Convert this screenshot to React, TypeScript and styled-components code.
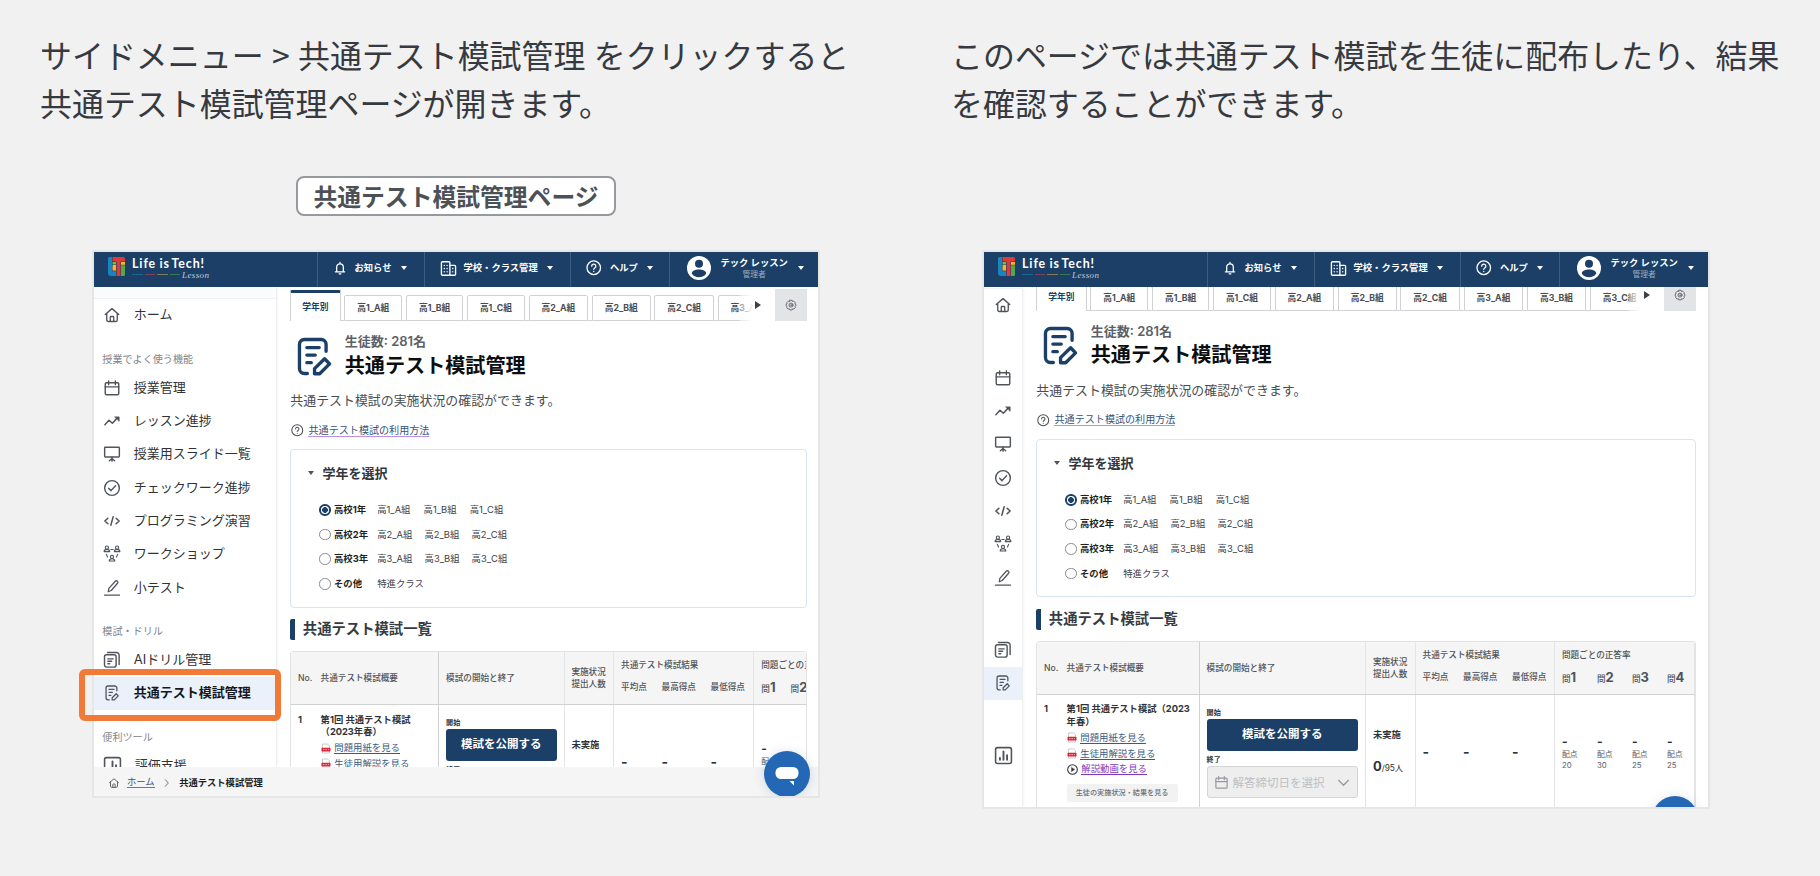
import React from 'react';
import styled, { createGlobalStyle, css } from 'styled-components';

const navy = '#1b3f67';
const sans = `Inter, "Noto Sans CJK JP", sans-serif`;

const Global = createGlobalStyle`
  * { box-sizing: border-box; }
  body { margin: 0; background: #f1f1f1; font-family: ${sans}; }
  p, h1, h2, h3 { margin: 0; }
`;

const Page = styled.div`
  width: 1820px;
  height: 876px;
  overflow: hidden;
  display: flex;
  background: #f1f1f1;
`;

const Column = styled.section<{ $w: number }>`
  width: ${(p) => p.$w}px;
  flex: none;
  display: flex;
  flex-direction: column;
  align-items: center;
  padding-top: 30px;
`;

const Lead = styled.p<{ $left: number }>`
  align-self: flex-start;
  margin-left: ${(p) => p.$left}px;
  height: 96px;
  font: 400 31.95px/48px "Noto Sans CJK JP", sans-serif;
  word-spacing: 1.2px;
  color: #363a40;
  white-space: nowrap;
`;

const LabelSlot = styled.div`
  height: 40px;
  margin: 50px 0 34px;
`;

const Label = styled.div`
  width: 320px;
  height: 40px;
  border: 2px solid #96999d;
  border-radius: 8px;
  background: #fff;
  text-align: center;
  font: 700 23.8px/35px "Noto Sans CJK JP", sans-serif;
  color: #4d5156;
  white-space: nowrap;
`;

const Frame = styled.div<{ $h: number }>`
  position: relative;
  width: 728px;
  height: ${(p) => p.$h}px;
  border: 2px solid #e6e6e6;
`;

const Highlight = styled.div`
  position: absolute;
  left: -15px;
  top: 417px;
  width: 202px;
  height: 52px;
  border: 6px solid #f17a38;
  border-radius: 6px;
`;

const Screen = styled.div`
  position: relative;
  width: 100%;
  height: 100%;
  overflow: hidden;
  background: #fff;
  display: flex;
  flex-direction: column;
  color: #33373c;
  white-space: nowrap;
`;

/* Header */
const Header = styled.header`
  flex: none;
  height: 35px;
  display: flex;
  background: ${navy};
  color: #fff;
`;

const Brand = styled.div`
  width: 223px;
  display: flex;
  padding: 5px 0 0 14px;
`;

const BrandText = styled.div`
  margin: -1px 0 0 7px;
  font: 700 12.4px/15px Lato, sans-serif;
  letter-spacing: 0.9px;
  word-spacing: -2px;
`;

const BrandWord = styled.span`
  margin-right: 1.5px;
`;

const BrandRule = styled.div`
  display: flex;
  align-items: center;
  gap: 2px;
  height: 7px;
`;

const Dash = styled.i<{ $c: string }>`
  width: 10.5px;
  height: 1px;
  background: ${(p) => p.$c};
`;

const Script = styled.span`
  font: italic 400 9px/8px "Liberation Serif", serif;
  letter-spacing: 0.4px;
  color: #c3cedb;
`;

const HeaderItem = styled.div<{ $w: number; $pad: number }>`
  width: ${(p) => p.$w}px;
  padding: 0 0 3px ${(p) => p.$pad}px;
  border-left: 1px solid #3d5c7f;
  display: flex;
  align-items: center;
  font-size: 9.3px;
  line-height: 12px;
  font-weight: 700;
`;

const HeaderText = styled.span<{ $l: number }>`
  margin-left: ${(p) => p.$l}px;
  margin-top: -1px;
`;

const User = styled.div`
  margin: -1px 0 0 10px;
  text-align: center;
  line-height: 12px;
  small {
    display: block;
    font-size: 7.8px;
    line-height: 10px;
    font-weight: 400;
    color: #a0aec0;
  }
`;

const Caret = styled.i<{ $l?: number; $s?: number; $c?: string; $right?: boolean }>`
  flex: none;
  margin-left: ${(p) => p.$l ?? 0}px;
  width: 0;
  height: 0;
  border: ${(p) => p.$s ?? 3}px solid transparent;
  ${(p) =>
    p.$right
      ? css`border-left: 6.5px solid ${p.$c}; border-right: 0; border-top-width: 4px; border-bottom-width: 4px;`
      : css`border-top: ${(p.$s ?? 3) + 1.2}px solid ${p.$c ?? '#fff'}; border-bottom: 0;`}
`;

const Body = styled.div`
  flex: 1;
  min-height: 0;
  display: flex;
  overflow: hidden;
`;

/* Sidebar */
const Sidebar = styled.nav<{ $mini: boolean }>`
  flex: none;
  width: ${(p) => (p.$mini ? 38 : 182)}px;
  box-shadow: 0 0 3px rgba(60, 70, 90, 0.22);
  background: #fff;
`;

const Strip = styled.div<{ $h: number }>`
  height: ${(p) => p.$h}px;
  background: #fafbfd;
  border-bottom: 1px solid #f0f1f4;
`;

const NavItem = styled.div<{ $active?: boolean; $mini: boolean }>`
  height: 33.33px;
  display: flex;
  align-items: center;
  padding-left: ${(p) => (p.$mini ? 10 : 9.3)}px;
  background: ${(p) => (p.$active ? '#eaf1fa' : 'transparent')};
  color: ${(p) => (p.$active ? '#15181c' : '#2f3338')};
  font-size: 13px;
  line-height: 18px;
  font-weight: ${(p) => (p.$active ? 700 : 400)};
  svg { flex: none; color: #50555c; }
  span { margin: -2px 0 0 12.5px; }
`;

const NavLabel = styled.div`
  height: 39px;
  padding: 20px 0 0 8.3px;
  font-size: 10.1px;
  line-height: 14px;
  color: #80848a;
`;

/* Main */
const Main = styled.main<{ $mini: boolean }>`
  flex: none;
  width: ${(p) => (p.$mini ? 659.5 : 516.5)}px;
  margin-left: 14.3px;
  padding-top: 2px;
  margin-top: ${(p) => (p.$mini ? -10.2 : 0)}px;
`;

const TabBar = styled.div`
  position: relative;
  height: 32px;
  display: flex;
  align-items: flex-end;
  overflow: hidden;
`;

const TabGap = styled.div`
  flex: none;
  width: 3.7px;
  height: 1px;
  background: #cfd1d4;
`;

const Tab = styled.div<{ $active?: boolean }>`
  flex: none;
  height: ${(p) => (p.$active ? 31 : 26)}px;
  width: ${(p) => (p.$active ? '50.3px' : 'auto')};
  padding: 0 ${(p) => (p.$active ? 0 : 11.95)}px;
  text-align: center;
  border: 1px solid #cfd1d4;
  border-radius: 2px 2px 0 0;
  font-size: 8.75px;
  font-weight: 700;
  line-height: 25px;
  color: #4a4e54;
  ${(p) =>
    p.$active &&
    css`
      color: ${navy};
      border-top: 3px solid ${navy};
      border-bottom: 0;
      line-height: 29px;
    `}
`;

const TabEnd = styled.div`
  position: absolute;
  right: 0;
  top: 0;
  height: 32px;
  display: flex;
`;

const Fade = styled.div`
  width: 35px;
  display: flex;
  align-items: center;
  padding: 0 0 0 15px;
  background: linear-gradient(90deg, rgba(255, 255, 255, 0.4), #fff 38%);
`;

const Gear = styled.div`
  width: 32px;
  background: #e3e4e6;
  display: grid;
  place-items: center;
  color: #5a5f66;
`;

const TitleRow = styled.div`
  display: flex;
  height: 47px;
  margin-top: 11px;
  padding-left: 6.7px;
  svg { margin-top: 4.5px; color: ${navy}; }
`;

const TitleText = styled.div`
  margin-left: 12.3px;
  font-size: 13px;
  line-height: 18px;
  font-weight: 600;
  color: #5c6167;
  h1 {
    margin-top: 2.5px;
    font-size: 20.1px;
    line-height: 27px;
    font-weight: 700;
    color: #0c0e10;
  }
`;

const Desc = styled.p`
  margin-top: 11px;
  font-size: 12.93px;
  line-height: 20px;
  color: #4a4e54;
`;

const HelpLink = styled.div`
  margin-top: 12.5px;
  height: 16px;
  display: flex;
  align-items: center;
  padding-left: 1px;
  color: #4a4e54;
  a {
    margin-left: 4.7px;
    font-size: 10.08px;
    line-height: 11px;
    color: #34557c;
    border-bottom: 1px solid #c08fdc;
  }
`;

const Card = styled.div`
  margin-top: 10.5px;
  height: 158.5px;
  border: 1px solid #d8e5f3;
  border-radius: 4px;
  padding-top: 13px;
`;

const CardTitle = styled.h3`
  display: flex;
  align-items: center;
  gap: 8.3px;
  padding-left: 17px;
  font-size: 13px;
  line-height: 20px;
  font-weight: 600;
  margin-bottom: 14.7px;
`;

const GradeRow = styled.div<{ $gap: number }>`
  height: 24.6px;
  display: flex;
  align-items: center;
  padding-left: 28.2px;
  font-size: 9.4px;
  line-height: 14px;
  b { width: 43.2px; margin-left: 3px; color: #1c1f23; }
  span { margin-right: ${(p) => p.$gap}px; color: #3d4147; }
`;

const Radio = styled.i<{ $on?: boolean }>`
  width: 11.5px;
  height: 11.5px;
  border-radius: 50%;
  background: #fff;
  border: 1px solid #868a90;
  ${(p) =>
    p.$on &&
    css`
      border: 2px solid ${navy};
      background: radial-gradient(circle, ${navy} 0 2.6px, #fff 3.1px);
    `}
`;

const SectionTitle = styled.h2`
  margin-top: 11.5px;
  height: 21px;
  border-left: 5px solid ${navy};
  border-radius: 2px;
  padding-left: 7.5px;
  font-size: 14.35px;
  line-height: 20px;
  font-weight: 600;
  color: #383c42;
`;

/* Table */
const Table = styled.div`
  margin-top: 11.3px;
  border: 1px solid #e2e3e5;
  border-radius: 3px 3px 0 0;
  overflow: hidden;
`;

const Row = styled.div<{ $mini: boolean; $head?: boolean }>`
  display: grid;
  grid-template-columns: ${(p) => (p.$mini ? '162.5px 166.3px 49.7px 139.3px 1fr' : '148px 125.3px 49.7px 140.2px 196px')};
  height: ${(p) => (p.$head ? 53 : 130)}px;
  background: ${(p) => (p.$head ? '#f5f5f5' : '#fff')};
  border-bottom: 1px solid #cfd0d2;
  font-size: ${(p) => (p.$head ? 8.6 : 9.3)}px;
  font-weight: ${(p) => (p.$head ? 500 : 400)};
  color: ${(p) => (p.$head ? '#4f5359' : '#2f3338')};
`;

const Cell = styled.div<{ $line?: string }>`
  padding-left: 6.8px;
  border-right: 1px solid ${(p) => p.$line ?? '#e4e5e7'};
  overflow: hidden;
`;

const HeadLine = styled.div<{ $top: number }>`
  padding-top: ${(p) => p.$top}px;
  line-height: 12px;
  display: flex;
`;

const Slot = styled.span<{ $w: number }>`
  width: ${(p) => p.$w}px;
  flex: none;
`;

const BigNo = styled.b`
  font-size: 13px;
  font-weight: 700;
`;

const Overview = styled.div`
  display: flex;
  padding-top: 8.3px;
  line-height: 12.8px;
  font-weight: 700;
`;

const Doc = styled.div<{ $visited?: boolean }>`
  display: flex;
  align-items: center;
  height: 15.8px;
  font-weight: 400;
  span {
    margin-left: 3.7px;
    line-height: 11px;
    font-size: 9.4px;
    color: ${(p) => (p.$visited ? '#8536b8' : '#3b5b7e')};
    border-bottom: 1px solid ${(p) => (p.$visited ? '#8536b8' : '#3b5b7e')};
  }
`;

const DocList = styled.div`
  padding-top: 1px;
`;

const GrayButton = styled.div`
  width: 111px;
  height: 18px;
  margin-top: 7px;
  background: #f2f2f3;
  border-radius: 2px;
  text-align: center;
  font-size: 7.15px;
  line-height: 17px;
  font-weight: 500;
  color: #6b6f75;
`;

const Schedule = styled.div`
  padding: 10.5px 7px 0 0;
`;

const Tiny = styled.div`
  font-size: 7.1px;
  line-height: 13px;
  height: 13.5px;
  font-weight: 600;
`;

const Publish = styled.div`
  height: 32px;
  border-radius: 3px;
  background: ${navy};
  color: #fff;
  text-align: center;
  font-size: 11.5px;
  line-height: 31px;
  font-weight: 700;
  margin-bottom: 1.5px;
`;

const DateSelect = styled.div`
  height: 32px;
  border: 1px solid #d3d4d6;
  border-radius: 3px;
  background: #eeeeef;
  display: flex;
  align-items: center;
  padding: 0 7.5px 0 6.5px;
  font-size: 11.5px;
  color: #bdbfc2;
  span { flex: 1; margin: -1px 0 0 3.5px; }
  svg { color: #96999d; }
`;

const Status = styled.div`
  padding-top: 33px;
  line-height: 14px;
  font-weight: 600;
  p { margin-top: 15px; font-weight: 400; font-size: 8.3px; line-height: 18px; }
  p b { font-size: 13px; }
`;

const Scores = styled.div`
  padding-top: 49px;
  display: flex;
  font-size: 14px;
  line-height: 16px;
  font-weight: 700;
`;

const Points = styled.div<{ $top: number }>`
  padding-top: ${(p) => p.$top}px;
  display: flex;
  font-size: 7.8px;
  line-height: 10.4px;
  color: #5a5e64;
  b { display: block; font-size: 12px; line-height: 13px; height: 14px; color: #2b2f34; }
`;

/* Overlays */
const Breadcrumb = styled.footer`
  flex: none;
  height: 29px;
  background: #f5f5f5;
  display: flex;
  align-items: center;
  padding: 2px 0 0 13.5px;
  font-size: 9.3px;
  color: #50555c;
  a { margin: -1px 8px 0 7.5px; line-height: 11px; color: #34557c; border-bottom: 1px solid #5f7b99; }
  b { margin: -1px 0 0 8.5px; color: #1c1f23; }
`;

const Chat = styled.div<{ $left: number; $top: number }>`
  position: absolute;
  left: ${(p) => p.$left}px;
  top: ${(p) => p.$top}px;
  width: 46px;
  height: 46px;
  border-radius: 50%;
  background: #2468b5;
  box-shadow: 0 1px 12px rgba(20, 60, 110, 0.16);
`;

/* Icons */
type IconProps = { s?: number; w?: number; children?: React.ReactNode };
const Svg = ({ s = 16, w = 1.9, children }: IconProps) => (
  <svg width={s} height={s} viewBox="0 0 24 24" fill="none" stroke="currentColor" strokeWidth={w} strokeLinecap="round" strokeLinejoin="round">
    {children}
  </svg>
);

const HomeIcon = ({ s = 18 }: IconProps) => (
  <Svg s={s} w={1.8}>
    <path d="M3 11.3 12 3.5l9 7.8M5 10v8.5A2.2 2.2 0 0 0 7.2 20.7h9.6A2.2 2.2 0 0 0 19 18.5V10" />
    <path d="M9.7 20.5V15a1 1 0 0 1 1-1h2.6a1 1 0 0 1 1 1v5.5" />
  </Svg>
);
const CalendarIcon = ({ s = 18 }: IconProps) => (
  <Svg s={s}>
    <rect x="3" y="5" width="18" height="16" rx="1.6" />
    <path d="M3 10.5h18M7.5 2.5v5M16.5 2.5v5" />
  </Svg>
);
const TrendIcon = () => (
  <Svg s={18} w={2}>
    <path d="M2.5 17l5.500-6 4.500 4 6-6.500" />
    <path d="M16 6.500h5.500V12z" fill="currentColor" strokeWidth={1} />
  </Svg>
);
const BoardIcon = () => (
  <Svg s={18}>
    <rect x="2.2" y="3" width="19.6" height="13" rx="1" />
    <path d="M12 16v5.500M12 18l-3.500 3M12 18l3.500 3" />
  </Svg>
);
const CheckIcon = () => (
  <Svg s={18}>
    <circle cx="12" cy="12" r="9.8" />
    <path d="M7.500 12.300l3.200 3.200 6-6.500" />
  </Svg>
);
const CodeIcon = () => (
  <Svg s={18} w={2.1}>
    <path d="M6.500 8.300L2.500 12l4 3.700M17.500 8.300l4 3.700-4 3.700M13.500 6.500l-3 11" />
  </Svg>
);
const Person = ({ x, y }: { x: number; y: number }) => (
  <g transform={`translate(${x} ${y})`}>
    <circle cx="0" cy="-2" r="2.1" />
    <path d="M-3.700 3.300c0-4 7.400-4 7.400 0z" />
  </g>
);
const GroupIcon = () => (
  <Svg s={18} w={1.5}>
    <Person x={5.2} y={5.5} />
    <Person x={18.8} y={5.5} />
    <Person x={12} y={18} />
    <path d="M10.500 6h3M4.500 12.500l1.500 3.500M19.500 12.500l-1.500 3.500" />
  </Svg>
);
const PenIcon = () => (
  <Svg s={18} w={1.7}>
    <path d="M2 21.500h20M7 17l.8-4.500 8.600-9.500a2 2 0 0 1 3 2.700L11 15.300z" />
  </Svg>
);
const DrillIcon = () => (
  <Svg s={18} w={1.9}>
    <rect x="2" y="5" width="15.500" height="16.500" rx="2.800" />
    <path d="M6 2h12a3.500 3.500 0 0 1 3.500 3.500V18M6.500 10.500h7M6.500 13.700h5M6.500 16.900H9" />
  </Svg>
);
const ChartIcon = () => (
  <Svg s={19} w={2}>
    <rect x="2" y="2" width="20" height="20" rx="2.500" />
    <path d="M7.500 17.500V15M12 17.500V7M16.500 17.500v-6" strokeWidth={2.4} />
  </Svg>
);
const HelpIcon = ({ s = 13 }: IconProps) => (
  <Svg s={s} w={2}>
    <circle cx="12" cy="12" r="10.500" />
    <path d="M8.800 9.600a3.200 3.200 0 1 1 4.700 2.800c-1.100.7-1.500 1.100-1.500 2.100M12 17.600v.2" />
  </Svg>
);
const BellIcon = () => (
  <Svg s={14} w={2.2}>
    <path d="M4 18.500h16M6.300 18.500V10.500a5.700 5.700 0 0 1 11.400 0v8M12 2.500v2M10.500 22h3" />
  </Svg>
);
const SchoolIcon = () => (
  <Svg s={17} w={1.9}>
    <rect x="2" y="2.500" width="12" height="19" rx="1.500" />
    <path d="M14 7.500h6.500A1.500 1.500 0 0 1 22 9v11a1.500 1.500 0 0 1-1.500 1.500H14M6 7.500v.2M10 7.500v.2M6 12v.2M10 12v.2M6 16.500v.2M10 16.500v.2M18 12v.2M18 16.500v.2" />
  </Svg>
);
const GearIcon = () => (
  <Svg s={12} w={1.8}>
    <path d="M9.700 2.500h4.600l.8 2.400 2.500-.5 2.900 3-.6 2.400 2 1.200v2.300l-2 1.400.6 2.500-2.900 2.900-2.500-.6-.8 2.400H9.700l-.9-2.400-2.400.6-2.900-2.900.6-2.500-2.100-1.400V11l2.100-1.200-.6-2.400 2.900-3 2.400.5z" />
    <circle cx="12" cy="12.200" r="4" />
    <circle cx="12" cy="12.200" r="0.600" />
  </Svg>
);
const ExamIcon = ({ w, h, stroke }: { w: number; h: number; stroke: number }) => (
  <svg width={w} height={h} viewBox="-1 -1 36 40" fill="none" stroke="currentColor" strokeWidth={stroke} strokeLinecap="round" strokeLinejoin="round">
    <path d="M28.500 13.500V6.500a5 5 0 0 0-5-5h-17a5 5 0 0 0-5 5V31a5 5 0 0 0 5 5h3" />
    <path d="M9 9.700h12.500M9 17.300h8.500M9 25h4.500" />
    <path d="M16.800 36.200V31L27 21l5 5.200-10 10z" />
  </svg>
);
const ExamNavSlot = styled.i`
  display: flex;
  width: 18px;
  flex: none;
  justify-content: center;
`;
const PdfIcon = () => (
  <svg width="10" height="11" viewBox="0 0 10 11">
    <path d="M1.500 1h5l2 2v7h-7z" fill="#fff" stroke="#b9bcc0" strokeWidth="0.800" />
    <rect x="0.500" y="4.800" width="9" height="3.600" rx="0.600" fill="#d9263a" />
    <path d="M2 6.600h1.600M4.400 6.600H6M6.800 6.600H8" stroke="#f6c9ce" strokeWidth="0.800" />
  </svg>
);
const PlayIcon = () => (
  <Svg s={11} w={2.3}>
    <circle cx="12" cy="12" r="10.500" />
    <path d="M9.500 7v10l7.500-5z" fill="currentColor" strokeWidth={0.5} />
  </Svg>
);
const Logo = () => (
  <svg width="17" height="19" viewBox="0 0 17 19">
    <path d="M1.500 0H4v14.300h4V19H3a3 3 0 0 1-3-3V1.500A1.500 1.500 0 0 1 1.500 0z" fill="#1784c4" />
    <path d="M4.500 0h11A1.500 1.500 0 0 1 17 1.500v3H4.500z" fill="#e03a36" />
    <rect x="8.600" y="4" width="3.800" height="15" fill="#e03a36" />
    <rect x="4.500" y="5" width="3.500" height="2.500" fill="#7fb942" />
    <rect x="4.500" y="8" width="3.500" height="5.600" fill="#f5b62c" />
    <rect x="13" y="5" width="4" height="2.800" fill="#f5b62c" />
    <path d="M13 8.300h4v9.200a1.500 1.500 0 0 1-1.500 1.500H13z" fill="#5aa546" />
  </svg>
);
const Avatar = () => (
  <svg width="24" height="24" viewBox="0 0 24 24">
    <circle cx="12" cy="12" r="12" fill="#fff" />
    <circle cx="12" cy="7.700" r="4" fill={navy} />
    <path d="M4.800 17.500c0-5.300 14.400-5.300 14.400 0-2.600 5-11.800 5-14.400 0z" fill={navy} />
  </svg>
);
const Chevron = ({ s, down }: { s: number; down?: boolean }) => (
  <Svg s={s} w={2.4}>
    <path d={down ? 'M3 8l9 9 9-9' : 'M7 2l9 10-9 10'} />
  </Svg>
);

const lessonNav: [React.ReactNode, string][] = [
  [<CalendarIcon />, '授業管理'],
  [<TrendIcon />, 'レッスン進捗'],
  [<BoardIcon />, '授業用スライド一覧'],
  [<CheckIcon />, 'チェックワーク進捗'],
  [<CodeIcon />, 'プログラミング演習'],
  [<GroupIcon />, 'ワークショップ'],
  [<PenIcon />, '小テスト'],
];

const tabs = ['高1_A組', '高1_B組', '高1_C組', '高2_A組', '高2_B組', '高2_C組', '高3_A組', '高3_B組', '高3_C組'];

const grades = [
  { name: '高校1年', classes: ['高1_A組', '高1_B組', '高1_C組'], gap: 13.1 },
  { name: '高校2年', classes: ['高2_A組', '高2_B組', '高2_C組'], gap: 12.1 },
  { name: '高校3年', classes: ['高3_A組', '高3_B組', '高3_C組'], gap: 12.1 },
  { name: 'その他', classes: ['特進クラス'], gap: 12.1 },
];

const points = [20, 30, 25, 25];

function TopBar() {
  return (
    <Header>
      <Brand>
        <Logo />
        <BrandText>
          <BrandWord>Life</BrandWord> <BrandWord>is</BrandWord>Tech!
          <BrandRule>
            <Dash $c="#1c6795" />
            <Dash $c="#7c4358" />
            <Dash $c="#7f7a50" />
            <Dash $c="#397455" />
            <Script>Lesson</Script>
          </BrandRule>
        </BrandText>
      </Brand>
      <HeaderItem $w={107} $pad={14.5}>
        <BellIcon />
        <HeaderText $l={8}>お知らせ</HeaderText>
        <Caret $l={9} />
      </HeaderItem>
      <HeaderItem $w={146} $pad={14.5}>
        <SchoolIcon />
        <HeaderText $l={7}>学校・クラス管理</HeaderText>
        <Caret $l={9} />
      </HeaderItem>
      <HeaderItem $w={99} $pad={15}>
        <HelpIcon s={15.5} />
        <HeaderText $l={8.5}>ヘルプ</HeaderText>
        <Caret $l={9} />
      </HeaderItem>
      <HeaderItem $w={149} $pad={16.5}>
        <Avatar />
        <User>
          テック レッスン<small>管理者</small>
        </User>
        <Caret $l={10} />
      </HeaderItem>
    </Header>
  );
}

function SideMenu({ mini }: { mini: boolean }) {
  const item = (icon: React.ReactNode, text: string, active = false) => (
    <NavItem key={text} $mini={mini} $active={active}>
      {icon}
      {!mini && <span>{text}</span>}
    </NavItem>
  );
  return (
    <Sidebar $mini={mini}>
      <Strip $h={mini ? 1.8 : 11.7} />
      {item(<HomeIcon />, 'ホーム')}
      <NavLabel>{!mini && '授業でよく使う機能'}</NavLabel>
      {lessonNav.map(([icon, text]) => item(icon, text))}
      <NavLabel>{!mini && '模試・ドリル'}</NavLabel>
      {item(<DrillIcon />, 'AIドリル管理')}
      {item(
        <ExamNavSlot>
          <ExamIcon w={14.5} h={16} stroke={3.2} />
        </ExamNavSlot>,
        '共通テスト模試管理',
        true,
      )}
      <NavLabel>{!mini && '便利ツール'}</NavLabel>
      {item(<ChartIcon />, '評価支援')}
    </Sidebar>
  );
}

function ExamTable({ mini }: { mini: boolean }) {
  const step = mini ? 35 : 29.3;
  return (
    <Table>
      <Row $mini={mini} $head>
        <Cell $line="#cfd0d2">
          <HeadLine $top={20}>
            <Slot $w={22.5}>No.</Slot>共通テスト模試概要
          </HeadLine>
        </Cell>
        <Cell>
          <HeadLine $top={19.5}>模試の開始と終了</HeadLine>
        </Cell>
        <Cell>
          <HeadLine $top={14}>実施状況</HeadLine>
          <HeadLine $top={0}>提出人数</HeadLine>
        </Cell>
        <Cell>
          <HeadLine $top={6.5}>共通テスト模試結果</HeadLine>
          <HeadLine $top={10.5}>
            <Slot $w={40.5}>平均点</Slot>
            <Slot $w={49}>最高得点</Slot>最低得点
          </HeadLine>
        </Cell>
        <Cell>
          <HeadLine $top={6.5}>問題ごとの正答率</HeadLine>
          <HeadLine $top={10.5}>
            {points.map((_, i) => (
              <Slot key={i} $w={step}>
                問<BigNo>{i + 1}</BigNo>
              </Slot>
            ))}
          </HeadLine>
        </Cell>
      </Row>
      <Row $mini={mini}>
        <Cell $line="#cfd0d2">
          <Overview>
            <Slot $w={22.5}>1</Slot>
            <div>
              第1回 共通テスト模試{mini ? '（2023' : ''}
              <br />
              {mini ? '年春）' : '（2023年春）'}
              <DocList>
                <Doc><PdfIcon /><span>問題用紙を見る</span></Doc>
                <Doc><PdfIcon /><span>生徒用解説を見る</span></Doc>
                <Doc $visited><PlayIcon /><span>解説動画を見る</span></Doc>
              </DocList>
              <GrayButton>生徒の実施状況・結果を見る</GrayButton>
            </div>
          </Overview>
        </Cell>
        <Cell>
          <Schedule>
            <Tiny>開始</Tiny>
            <Publish>模試を公開する</Publish>
            <Tiny>終了</Tiny>
            <DateSelect>
              <CalendarIcon s={15} />
              <span>解答締切日を選択</span>
              <Chevron s={13} down />
            </DateSelect>
          </Schedule>
        </Cell>
        <Cell>
          <Status>
            未実施
            <p><b>0</b>/95人</p>
          </Status>
        </Cell>
        <Cell>
          <Scores>
            <Slot $w={40.5}>-</Slot>
            <Slot $w={49}>-</Slot>-
          </Scores>
        </Cell>
        <Cell>
          <Points $top={mini ? 40 : 36.5}>
            {points.slice(0, mini ? 4 : 1).map((p, i) => (
              <Slot key={i} $w={step}>
                <b>-</b>配点
                <br />
                {p}
              </Slot>
            ))}
          </Points>
        </Cell>
      </Row>
    </Table>
  );
}

function AppScreen({ mini = false }: { mini?: boolean }) {
  return (
    <Screen>
      <TopBar />
      <Body>
        <SideMenu mini={mini} />
        <Main $mini={mini}>
          <TabBar>
            <Tab $active>学年別</Tab>
            {tabs.map((t) => (
              <React.Fragment key={t}>
                <TabGap />
                <Tab>{t}</Tab>
              </React.Fragment>
            ))}
            <TabEnd>
              <Fade>
                <Caret $right $c="#3d4147" />
              </Fade>
              <Gear>
                <GearIcon />
              </Gear>
            </TabEnd>
          </TabBar>
          <TitleRow>
            <ExamIcon w={35.5} h={39.5} stroke={3.4} />
            <TitleText>
              生徒数: 281名
              <h1>共通テスト模試管理</h1>
            </TitleText>
          </TitleRow>
          <Desc>共通テスト模試の実施状況の確認ができます。</Desc>
          <HelpLink>
            <HelpIcon s={12.5} />
            <a>共通テスト模試の利用方法</a>
          </HelpLink>
          <Card>
            <CardTitle>
              <Caret $s={3.6} $c="#50555c" />
              学年を選択
            </CardTitle>
            {grades.map((g, i) => (
              <GradeRow key={g.name} $gap={g.gap}>
                <Radio $on={i === 0} />
                <b>{g.name}</b>
                {g.classes.map((c) => (
                  <span key={c}>{c}</span>
                ))}
              </GradeRow>
            ))}
          </Card>
          <SectionTitle>共通テスト模試一覧</SectionTitle>
          <ExamTable mini={mini} />
        </Main>
      </Body>
      {!mini && (
        <Breadcrumb>
          <HomeIcon s={12} />
          <a>ホーム</a>
          <Chevron s={8} />
          <b>共通テスト模試管理</b>
        </Breadcrumb>
      )}
      <Chat $left={mini ? 668 : 669.7} $top={mini ? 544 : 499}>
        <svg width="46" height="46" viewBox="0 0 46 46">
          <rect x="11.500" y="16" width="23" height="12" rx="5.500" fill="#fff" />
          <path d="M25.500 30h4.500v4.500z" fill="#fff" />
        </svg>
      </Chat>
    </Screen>
  );
}

export default function App() {
  return (
    <Page>
      <Global />
      <Column $w={912}>
        <Lead $left={40}>
          サイドメニュー &gt; 共通テスト模試管理 をクリックすると
          <br />
          共通テスト模試管理ページが開きます。
        </Lead>
        <LabelSlot>
          <Label>共通テスト模試管理ページ</Label>
        </LabelSlot>
        <Frame $h={548}>
          <AppScreen />
          <Highlight />
        </Frame>
      </Column>
      <Column $w={868}>
        <Lead $left={39}>
          このページでは共通テスト模試を生徒に配布したり、結果
          <br />
          を確認することができます。
        </Lead>
        <LabelSlot />
        <Frame $h={559}>
          <AppScreen mini />
        </Frame>
      </Column>
    </Page>
  );
}
